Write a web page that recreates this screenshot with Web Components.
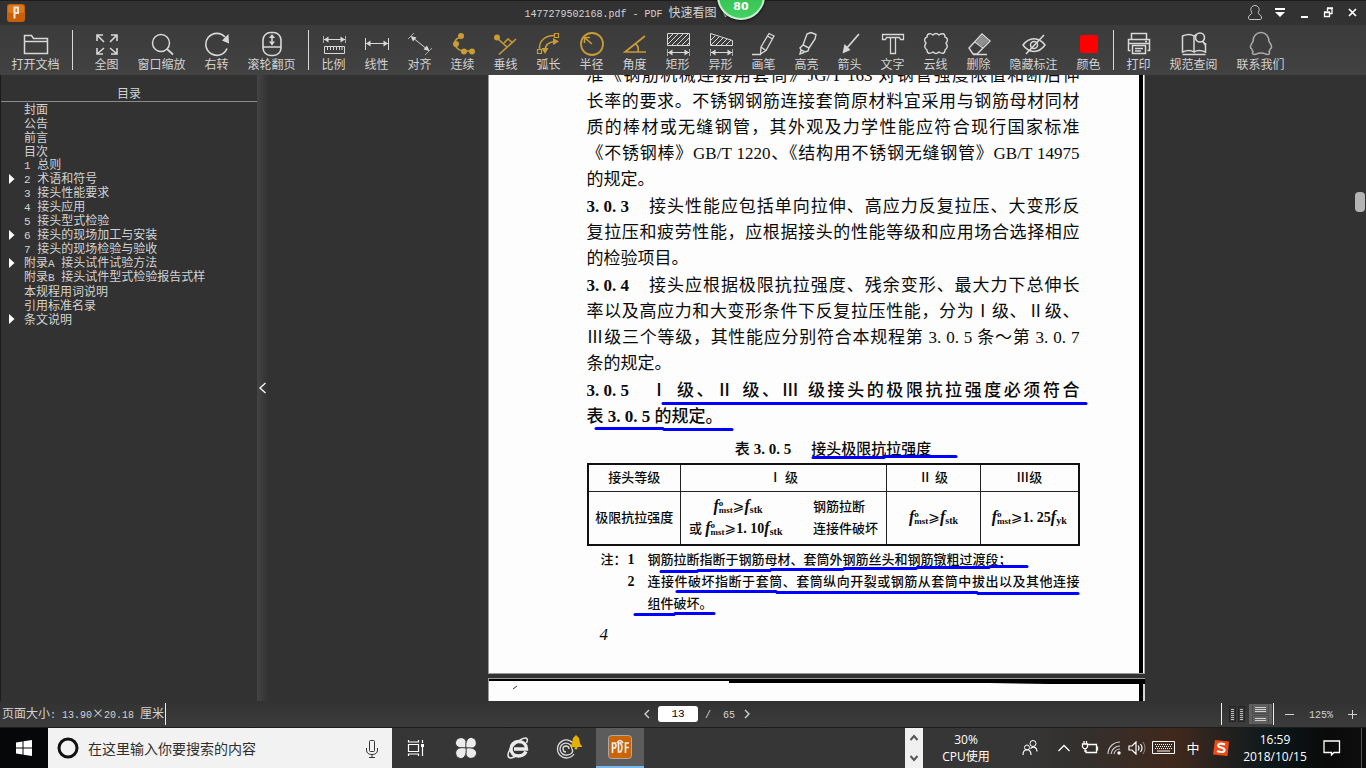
<!DOCTYPE html>
<html lang="zh-CN">
<head>
<meta charset="utf-8">
<title>1477279502168.pdf - PDF 快速看图</title>
<style>
html,body{margin:0;height:100%}
body{display:flex;flex-direction:column;overflow:hidden;background:#323232;color:#d2d2d2;font:12px/14px "Noto Sans CJK SC",sans-serif}
app-workspace{flex:1;min-height:0}
</style>
</head>
<body>
<app-titlebar></app-titlebar>
<app-toolbar></app-toolbar>
<app-workspace>
  <outline-panel slot="side"></outline-panel>
  <doc-viewer></doc-viewer>
</app-workspace>
<status-bar></status-bar>
<task-bar></task-bar>

<script>
const define = (name, html, setup) => customElements.define(name, class extends HTMLElement {
  constructor() {
    super();
    this.attachShadow({mode: 'open'}).innerHTML = html;
  }
  connectedCallback() { if (setup && !this.ready) { this.ready = true; setup(this.shadowRoot, this); } }
});

/* Half-width runs are set in a monospaced face. */
const half = text => text.replace(/[\x20-\x7e]+/g, run => `<span class="m">${run.replace(/ /g, '&nbsp;')}</span>`);
const halfStyle = '.m{font:10px/14px "Liberation Mono",monospace}';

const reset = `*,*::after,:host{box-sizing:border-box}
button{appearance:none;border:0;padding:0;margin:0;background:none;color:inherit;font:inherit;cursor:pointer}
a{color:inherit;text-decoration:none}
svg{display:block;fill:none}
svg:not([stroke]){stroke:currentColor}
.f{fill:currentColor;stroke:none}`;

/* ---------- title bar ---------- */
define('app-titlebar', `
<style>${reset}${halfStyle}
:host{display:grid;grid-template-columns:38.4% 1fr auto;align-items:center;height:25px;flex:none;background:#323232;border-top:1px solid #1c1c1c;position:relative}
.logo{margin-left:7px}
.title{white-space:nowrap}
.win{display:flex;align-items:center;gap:2px;padding-right:3px;color:#fff}
.badge{position:absolute;left:calc(50% + 34px);top:-29px;width:48px;height:48px;border-radius:50%;background:linear-gradient(#35c050 40%,#43d163);border:2px solid #c9efd0;display:flex;align-items:flex-end;justify-content:center;color:#fff;font:bold 11px/14px "DejaVu Sans",sans-serif;padding-bottom:4px;box-shadow:0 1px 3px #000a}
</style>
<svg class="logo" width="18" height="18" viewBox="0 0 18 18" stroke="none"><rect width="18" height="18" rx="3" fill="#c96006"/><rect x="1" y="1" width="16" height="8" rx="2" fill="#d87a1c"/><path d="M7.5 14.500V3.500h3.500v5.500H7.500" stroke="#f4e3d2" stroke-width="2"/></svg>
<div class="title">${half('1477279502168.pdf - PDF ')}快速看图${half(' V')}</div>
<div class="win">
<button aria-label="账户"><svg width="24" height="20" stroke="#c8c8c8"><path d="M8.500 9c-2-4 1-6.500 3.500-6.500s5.500 2.500 3.500 6.500c-.5 1-.5 1.500.500 2 2 1.500 2.500 2.500 2.500 4 0 1-.5 1.500-1.500 1.500H7c-1 0-1.500-.5-1.500-1.500 0-1.500.5-2.500 2.500-4 1-.5 1-1 .5-2z"/></svg></button>
<button aria-label="菜单"><svg width="22" height="20"><path class="f" d="M6 5h10v2H6zM6 9h10l-5 5z"/></svg></button>
<button aria-label="最小化"><svg width="22" height="20"><path class="f" d="M8 13h7v2H8z"/></svg></button>
<button aria-label="还原"><svg width="22" height="20"><path d="M7.500 9.500h5v4h-5zM7 9h6M10.500 8V5.500h4.500v5h-2M10 5h6" stroke-width="1.300"/></svg></button>
<button aria-label="关闭"><svg width="22" height="20"><path d="M8 6l7 7M15 6l-7 7" stroke-width="1.700"/></svg></button>
</div>
<div class="badge">80</div>`);

/* ---------- toolbar ---------- */
const arrows = (y, a, b) => `<path d="M${a} ${y}H${b}"/><path class="f" d="M${a} ${y}l4.500-3v6zM${b} ${y}l-4.500-3v6z"/>`;
const icons = {
  open: '<path d="M2.500 22.500v-18h7l2 3h14v15zM2.500 10.500h23" stroke-width="1.500"/>',
  full: '<path d="M4 10V4h6M4 4l7 7M18 4h6v6M24 4l-7 7M4 17v6h6M4 23l7-6M24 17v6h-6M24 23l-7-6" stroke-width="1.600"/>',
  zoom: '<circle cx="13" cy="12" r="8.500" stroke-width="1.500"/><path d="M19 18l6 5.500" stroke-width="1.700"/>',
  turn: '<path d="M24 17.500A11 11 0 1 1 22 6" stroke-width="1.600"/><path class="f" d="M25.500 3l.5 9.500-7-3z"/>',
  wheel: '<rect x="5" y="1.500" width="18" height="23" rx="7.500" stroke-width="1.600"/><path d="M5 16h18M14 5v8" stroke-width="1.500"/><path class="f" d="M14 3l3 4h-6zM14 14.500l3-4h-6z"/>',
  scale: `<path d="M3.500 5v7M25.500 5v7" stroke="#aaa"/>${arrows(8.5, 4, 25)}<path d="M4.500 15.500h20v7h-20zM7.500 16v3M10.500 16v3M13.500 16v3M16.500 16v3M19.500 16v3M22 16v3"/>`,
  linear: `<path d="M2.500 7v12M25.500 7v12"/>${arrows(12.5, 3, 25)}`,
  align: '<path d="M2 8l6-6M19 24l7-7" stroke="#aaa"/><path d="M6 6l16 13"/><path class="f" d="M4.500 5l6 1.500-3.500 4zM23.500 20l-6-1.500 3.500-4z"/>',
  chain: '<path d="M12 6C5 8 4 13 8 17c3 3 5 3 9 3h6" stroke-width="1.500"/><g class="f"><circle cx="12" cy="5" r="3"/><circle cx="7" cy="13" r="3"/><circle cx="15" cy="20.500" r="3"/><circle cx="23" cy="20.500" r="3"/></g>',
  perp: '<path d="M7 23.500L24 8M5 7l10 9M12 12l4-4 5 4" stroke-width="1.600"/><circle class="f" cx="5" cy="6.500" r="3"/>',
  arc: '<path d="M4.500 18C4 10 10 4.500 19 4.500M10 20c0-5 3-9 10-9.500" stroke-width="1.500"/><path d="M2.500 18.500h4v4h-4zM19.500 2.500h4v4h-4z" stroke-width="1.200"/><path class="f" d="M18 7l6 3.500-6 3.500zM6.500 17h7L10 23z"/>',
  radius: '<circle cx="14" cy="13" r="11" stroke-width="1.800"/><path d="M14 13L7 7M6.500 12V6.500H12" stroke-width="1.600"/>',
  angle: '<path d="M24 5L4 21h21M14.500 13c3 2 3 4 2.500 8" stroke-width="1.700"/>',
  rect: `<path d="M3.500 2.500h22v12h-22zM4 8l5-5M4 13L14 3M8 14L19 3M13 14L24 3M18 14l7-7M23 14l2-2"/><path d="M3.500 18v7M25.500 18v7" stroke="#aaa"/>${arrows(21.5, 4, 25)}`,
  shape: `<path d="M3.500 2.500l22 7v5h-22zM4 9l4-4M4 14l8-8M9 14l7-7M14 14l6-6M19 14l5-5"/><path d="M3.500 18v7M25.500 18v7" stroke="#aaa"/>${arrows(21.5, 4, 25)}`,
  pen: '<path d="M19 2.500l5 2.500-8 14.500-5.500 3.500.5-7zM11 16l5 3.500M17.500 5l5 3M2 23.500h9" stroke-width="1.300"/>',
  mark: '<path d="M14 3l4-1.500 5 2-1 4.500-6 9-6-3zM10 14l-3 3 1 2 4 2 3-1 1-3M8 19l-1 4 4-1.500" stroke-width="1.400"/>',
  arrow: '<path d="M23 3L10 18" stroke-width="1.700"/><path class="f" d="M6.500 22.500l2-9.500 6 6z"/>',
  text: '<path d="M3.500 3.500h21v5h-3l-1-2h-4v16h-5v-16h-4l-1 2h-3zM11.500 6.500h5" stroke-width="1.300"/>',
  cloud: '<path d="M5 6c0-4 4-4 6-2 2-2 4-2 6 0 3-2 6-2 6 2 3 1 3 4 1 6 2 3 2 5-1 7 0 4-3 4-6 2-2 2-4 2-6 0-3 2-6 2-6-2-3-2-3-4-1-7-2-2-2-5 1-6z" stroke-width="1.400"/>',
  erase: '<path d="M4 17L17 3l8 7-13 13H8zM10 11l8 6M8 23.500h14" stroke-width="1.400"/><path d="M11 11l6 5 7-6-7-6z" fill="#8f8f8f" stroke="none"/>',
  hide: '<path d="M3 14c6-8.500 16-8.500 22 0-6 8.500-16 8.500-22 0z" stroke-width="1.500"/><circle cx="14" cy="14" r="3.500" stroke-width="1.500"/><path d="M24 4L6 23" stroke-width="1.600"/>',
  color: '<rect x="5" y="4" width="18" height="18" rx="2" fill="#f00" stroke="none"/>',
  print: '<path d="M6.500 8V2.500h15V8M5.500 19.500h-2v-11h21v11h-2M4 12.500h20M7.500 14.500h13v8h-13zM10 17.500h8M10 20h6M20 10.500h2" stroke-width="1.500"/>',
  book: '<path d="M14 21c-3-2-7-2-11.500 0V5C7 3 11 3 14 5zM14 21c3-2 7-2 11.500 0v-9M14 5l3-1.500M2.500 23.500h23" stroke-width="1.500"/><circle cx="20" cy="6.500" r="4.500" stroke-width="1.600"/><path d="M22.500 10l3 4" stroke-width="1.700"/>',
  qq: '<path d="M9.500 23c-3 1-5 0-3.500-2.500-1-1-1-2-1.500-3-2 0-1-4 1.500-7C6 5 9.500 1.500 14 1.500s8 3.500 8 9c2.500 3 3.500 7 1.500 7-.5 1-.5 2-1.500 3 1.500 2.500-.5 3.500-3.500 2.500-2-1.500-7-1.500-9 0z" stroke="#aaa" stroke-width="1.500"/>'
};

define('tool-button', `
<style>${reset}
:host{display:block;width:43px;flex:none}
:host([wide]){width:67px}
:host([gold]) svg{color:#c99c36}
button{display:flex;flex-direction:column;align-items:center;width:100%;white-space:nowrap}
svg{color:#d8d8d8}
</style>
<button><svg width="28" height="26" viewBox="0 0 28 26"></svg><span><slot></slot></span></button>`,
(root, host) => { root.querySelector('svg').innerHTML = icons[host.getAttribute('icon')]; });

define('app-toolbar', `
<style>
:host{display:flex;align-items:flex-start;height:50px;flex:none;padding:6px 2px 0;box-sizing:border-box;background:linear-gradient(#3b3b3b,#424242)}
i{width:1px;height:40px;margin:-1px 3px 0;background:#d8d8d8;flex:none}
i.far{margin-right:12px}
</style>
<tool-button wide icon="open">打开文档</tool-button><i class="far"></i>
<tool-button icon="full">全图</tool-button><tool-button wide icon="zoom">窗口缩放</tool-button><tool-button icon="turn">右转</tool-button><tool-button wide icon="wheel">滚轮翻页</tool-button><i></i>
<tool-button icon="scale">比例</tool-button><tool-button icon="linear">线性</tool-button><tool-button icon="align">对齐</tool-button>
<tool-button gold icon="chain">连续</tool-button><tool-button gold icon="perp">垂线</tool-button><tool-button gold icon="arc">弧长</tool-button><tool-button gold icon="radius">半径</tool-button><tool-button gold icon="angle">角度</tool-button>
<tool-button icon="rect">矩形</tool-button><tool-button icon="shape">异形</tool-button><tool-button icon="pen">画笔</tool-button><tool-button icon="mark">高亮</tool-button><tool-button icon="arrow">箭头</tool-button><tool-button icon="text">文字</tool-button><tool-button icon="cloud">云线</tool-button><tool-button icon="erase">删除</tool-button><tool-button wide icon="hide">隐藏标注</tool-button><tool-button icon="color">颜色</tool-button><i></i>
<tool-button icon="print">打印</tool-button><tool-button wide icon="book">规范查阅</tool-button><tool-button wide icon="qq">联系我们</tool-button>`);

/* ---------- workspace ---------- */
define('app-workspace', `
<style>${reset}
:host{display:flex}
slot[name=side]::slotted(*){width:257px;flex:none}
.split{width:11px;flex:none;display:flex;align-items:center;background:linear-gradient(90deg,#444,#323232)}
slot:not([name])::slotted(*){flex:1;min-width:0}
</style>
<slot name="side"></slot>
<button class="split" aria-label="收起目录"><svg width="11" height="14"><path d="M8.500 2L3 7l5.500 5" stroke="#eee" stroke-width="1.500"/></svg></button>
<slot></slot>`);

const outline = [['封面'], ['公告'], ['前言'], ['目次'], ['1 总则'], ['2 术语和符号', 1], ['3 接头性能要求'], ['4 接头应用'], ['5 接头型式检验'], ['6 接头的现场加工与安装', 1], ['7 接头的现场检验与验收'], ['附录A 接头试件试验方法', 1], ['附录B 接头试件型式检验报告式样'], ['本规程用词说明'], ['引用标准名录'], ['条文说明', 1]];
define('outline-panel', `
<style>${reset}${halfStyle}
:host{display:block;border-left:1px solid #1c1c1c;background:#323232}
.m{font-size:11px}
h2{margin:0;padding:11px 0 1px;border-bottom:1px solid #8c8c8c;text-align:center;font:inherit}
ul{list-style:none;margin:0;padding:0}
li{display:flex;align-items:center;height:14px;padding-left:8px;white-space:nowrap}
.tw{width:15px;height:14px;flex:none}
.tw svg{color:#fff}
</style>
<h2>目录</h2>
<ul>${outline.map(([t, kids]) => `<li>${kids ? '<button class="tw" aria-label="展开"><svg width="6" height="14"><path class="f" d="M0 2l5.500 5L0 12z"/></svg></button>' : '<span class="tw"></span>'}<a href="#">${half(t)}</a></li>`).join('')}</ul>`);

/* ---------- document ---------- */
const num = t => `<b class="no">${t}</b>`;
const f = sub => `<i>f</i><sub>${sub}</sub>`;
const fm = '<i>f</i><span class="ss"><span>o</span><span>mst</span></span>';
const ge = '<span class="ge">⩾</span>';
const strokes = [
  [662,403,1087,403],[595,428,664,428],[663,429,733,429],[812,457,885,457],[883,456,957,456],
  [660,571,698,571],[697,570,771,570],[770,569,844,569],[843,568,917,568],[916,567,990,567],[989,566,1028,566],
  [676,591,777,591],[776,592,978,592],[977,593,1079,593],[634,614,675,614],[674,613,715,613]];

define('doc-page', `
<style>${reset}
:host{display:block;position:relative;width:657px;height:612px;flex:none;padding:1px 65px 0 98px;border-left:1px solid #999;border-bottom:1px solid #999;background:#fdfdfd;color:#0b0b0b;font:17px/26px "Liberation Serif","Noto Sans CJK SC",serif}
:host::after{content:"";box-sizing:border-box;position:absolute;top:0;bottom:0;right:0;width:6px;border-left:4px solid #000;border-right:1px solid #aaa;background:#fff}
p{margin:0}
p+p{margin-top:1px}
p span.l{display:block;white-space:nowrap}
.j{text-align:justify;text-align-last:justify}
.no{display:inline-block;text-align-last:start;margin-right:19px;white-space:pre}
.strong{font-weight:500}
.cap{display:flex;justify-content:center;gap:20px;margin-top:6px;font-size:15px;font-weight:500}
table{width:100%;margin-top:1px;border-collapse:collapse;border:2px solid #111;table-layout:fixed;font-size:13px;font-weight:500;line-height:22px}
th,td{border:1px solid #222;padding:0;text-align:center;font-weight:500;white-space:nowrap}
th{height:27px}td{height:54px}
.pair{display:grid;grid-template-columns:98px 1fr;grid-auto-rows:22px;column-gap:26px;padding-left:8px;text-align:left}
.pair .c{text-align:center}
td b{font-size:14px}
i{font-size:16px;line-height:16px}
sub{font-size:10px;line-height:0;vertical-align:-2px}
.ss{display:inline-flex;flex-direction:column;height:12px;text-align:left;vertical-align:5px;font-size:9px;line-height:7px}
.ge{font:14px/14px "DejaVu Sans",sans-serif}
dl{display:grid;grid-template-columns:27px 20px 1fr;margin:3px 0 0;padding-left:14px;font-size:13px;font-weight:500;line-height:22px;white-space:nowrap}
dl>*{margin:0}
dl b{font-size:14px}
dd{grid-column:3}
footer{margin-top:7px;padding-left:13px;font-style:italic;line-height:26px}
.ink{position:absolute;left:-1px;top:0}
</style>
<p><span class="l j">准《钢筋机械连接用套筒》JG/T 163 对钢管强度限值和断后伸</span><span class="l j">长率的要求。不锈钢钢筋连接套筒原材料宜采用与钢筋母材同材</span><span class="l j">质的棒材或无缝钢管，其外观及力学性能应符合现行国家标准</span><span class="l j">《不锈钢棒》GB/T 1220、《结构用不锈钢无缝钢管》GB/T 14975</span><span class="l">的规定。</span></p>
<p><span class="l j">${num('3. 0. 3')}接头性能应包括单向拉伸、高应力反复拉压、大变形反</span><span class="l j">复拉压和疲劳性能，应根据接头的性能等级和应用场合选择相应</span><span class="l">的检验项目。</span></p>
<p><span class="l j">${num('3. 0. 4')}接头应根据极限抗拉强度、残余变形、最大力下总伸长</span><span class="l j">率以及高应力和大变形条件下反复拉压性能，分为Ⅰ级、Ⅱ级、</span><span class="l j">Ⅲ级三个等级，其性能应分别符合本规程第 3. 0. 5 条～第 3. 0. 7</span><span class="l">条的规定。</span></p>
<p class="strong"><span class="l j">${num('3. 0. 5')}Ⅰ 级、Ⅱ 级、Ⅲ 级接头的极限抗拉强度必须符合</span><span class="l">表 <b>3. 0. 5</b> 的规定。</span></p>
<div class="cap"><span>表 <b>3. 0. 5</b></span><span>接头极限抗拉强度</span></div>
<table>
<colgroup><col style="width:93px"><col style="width:206px"><col style="width:94px"><col></colgroup>
<tr><th>接头等级</th><th>Ⅰ 级</th><th>Ⅱ 级</th><th>Ⅲ级</th></tr>
<tr><td>极限抗拉强度</td><td><div class="pair"><b class="c">${fm}${ge}${f('stk')}</b><span>钢筋拉断</span><span>或 <b>${fm}${ge}1. 10${f('stk')}</b></span><span>连接件破坏</span></div></td><td><b>${fm}${ge}${f('stk')}</b></td><td><b>${fm}${ge}1. 25${f('yk')}</b></td></tr>
</table>
<dl><dt>注：</dt><b>1</b><dd>钢筋拉断指断于钢筋母材、套筒外钢筋丝头和钢筋镦粗过渡段；</dd><dt></dt><b>2</b><dd class="j">连接件破坏指断于套筒、套筒纵向开裂或钢筋从套筒中拔出以及其他连接</dd><dd>组件破坏。</dd></dl>
<footer>4</footer>
<svg class="ink" width="657" height="611" viewBox="488 62 657 611" stroke="#00f" stroke-width="3" stroke-linecap="round">${strokes.map(([a, b, c, d]) => `<path d="M${a + 1} ${b}.500L${c - 1} ${d}.500"/>`).join('')}</svg>`);

define('doc-viewer', `
<style>
:host{display:flex;flex-direction:column;align-items:center;gap:4px;overflow:hidden;position:relative;box-sizing:border-box;padding-right:2px;background:#323232}
doc-page{margin-top:-13px}
.next{position:relative;box-sizing:border-box;width:657px;flex:1 0 23px;border-top:1px solid #999;border-left:1px solid #999;background:#fdfdfd}
.next svg{display:block;width:100%;height:22px}
.thumb{position:absolute;right:1px;top:117px;width:10px;height:20px;border-radius:4px;background:#b4b4b4}
</style>
<doc-page></doc-page>
<div class="next"><svg viewBox="0 0 656 22" preserveAspectRatio="none"><path d="M0 0h656v5H560l-60-1H240V2H0z"/><path d="M650 3h4v19h-4z"/><path d="M655 5v17" stroke="#aaa"/><path d="M24 10l4-3" stroke="#333"/></svg></div>
<div class="thumb"></div>`);

/* ---------- status bar ---------- */
define('status-bar', `
<style>${reset}${halfStyle}
:host{display:grid;grid-template-columns:47% auto 1fr;align-items:center;height:27px;flex:none;background:linear-gradient(#323232,#3c3c3c);border-bottom:1px solid #1c1c1c}
.size{display:flex;align-items:center;gap:1px;padding-left:2px;white-space:nowrap}
.sep{width:1px;height:22px;background:#eee}
.pager,.view{display:flex;align-items:center}
input{width:40px;height:16px;margin:0 7px 0 5px;border:0;border-radius:3px;padding:0;background:#fff;color:#000;text-align:center;font:11px/14px "Liberation Mono",monospace}
.view{justify-content:flex-end;padding-right:7px}
.two{width:27px;padding-left:6px}
.one{width:23px;height:20px;background:#606060;margin-right:1px}
.minus{margin-left:9px}
.pct{width:50px;text-align:center}
</style>
<div class="size"><span>页面大小${half(': 13.90')}×${half('20.18 ')}厘米</span><span class="sep"></span></div>
<div class="pager"><button aria-label="上一页"><svg width="11" height="14"><path d="M7 3L3 7l4 4" stroke-width="1.400"/></svg></button><input value="13" aria-label="页码"><span>${half('/  65')}</span><button aria-label="下一页"><svg width="20" height="14"><path d="M10 3l4 4-4 4" stroke-width="1.400"/></svg></button></div>
<div class="view"><span class="sep"></span>
<button class="two" aria-label="双页"><svg width="20" height="18"><path d="M1.500 1.500h6v15h-6zM10.500 1.500h6v15h-6z" stroke="#222"/><path d="M3 4.500h3M3 6.500h3M3 8.500h3M3 10.500h3M3 12.500h3M3 14.500h3M12 4.500h3M12 6.500h3M12 8.500h3M12 10.500h3M12 12.500h3M12 14.500h3" stroke="#bbb"/></svg></button>
<button class="one" aria-label="单页连续"><svg width="23" height="20"><path d="M3.500 1v8.500h16V1M3.500 19v-7.500h16V19" stroke="#4a4a4a"/><path d="M6 3.500h11M6 5.500h11M6 7.500h11M6 14.500h11M6 16.500h11" stroke="#d0d0d0"/></svg></button>
<span class="sep"></span>
<button class="minus" aria-label="缩小"><svg width="13" height="14"><path d="M2 7.500h9"/></svg></button><span class="pct">${half('125%')}</span><button aria-label="放大"><svg width="13" height="14"><path d="M2 7.500h9M6.500 3v9"/></svg></button></div>`);

/* ---------- taskbar ---------- */
define('task-bar', `
<style>${reset}
:host{display:flex;align-items:stretch;height:40px;flex:none;color:#fff;background:linear-gradient(90deg,#363636 75%,#33302e 79%,#41281c 86%,#2a2320 89%,#0c181b 93%,#0a0a0a 97%,#0d0d0d);font:12px/17px "Open Sans","Noto Sans CJK SC",sans-serif}
button{display:flex;align-items:center;justify-content:center;flex:none}
.start{width:48px;background:#050708}
.search{display:flex;align-items:center;width:344px;background:#f2f2f2;color:#111;flex:none}
.search svg{flex:none}
input{flex:1;min-width:0;border:0;padding:0;background:none;outline:0;color:#222;font:14px/20px "Noto Sans CJK SC",sans-serif}
input::placeholder{color:#2e2e2e;opacity:1}
.app{width:52px}
.app.first{width:48px}
.app.on{width:48px;background:#5c5c5c;border-bottom:2px solid #76b9ed}
.tray{display:flex;margin-left:auto}
.spin{width:18px;background:#f0f0f0;color:#555}
.cpu,.clock{display:flex;flex-direction:column;justify-content:center;text-align:center;white-space:nowrap}
.cpu{width:86px}.clock{width:78px}
.t{width:26px}
.people{width:42px}.wifi{width:22px}.vol{width:23px}.kbd{width:32px}.sogou{width:30px}.note{width:36px}
.ime{font-size:13px}
.edge{width:5px;border-left:1px solid #555;margin-left:11px}
</style>
<button class="start" aria-label="开始"><svg width="16" height="16"><path class="f" d="M0 2.500l6.500-1v6H0zM7.500 1.300L16 0v7.500H7.500zM0 8.500h6.500v6l-6.500-1zM7.500 8.500H16V16l-8.500-1.300z"/></svg></button>
<label class="search"><svg width="40" height="40"><circle cx="20" cy="20" r="9" stroke-width="3"/></svg><input placeholder="在这里输入你要搜索的内容" aria-label="搜索"><svg width="40" height="40" stroke="#333"><rect x="17.500" y="12.500" width="5" height="11" rx="1"/><path d="M14.500 20v2c0 3 2 4.500 5.500 4.500s5.500-1.500 5.500-4.500v-2M20 27v3M17 29.500h6"/></svg></label>
<button class="app first" aria-label="任务视图"><svg width="18" height="16" stroke="#fff" stroke-width="1.200"><path d="M1.500 4.500h10v7h-10zM1.500 0v2h10V0M1.500 16v-2h10v2M15.500 0v3M15.500 7v9"/><path class="f" d="M14 4h3v3h-3z"/></svg></button>
<button class="app" aria-label="搜狗"><svg width="22" height="22" viewBox="0 0 22 22"><g fill="#ececec" stroke="#363636"><path d="M11 11C4 12 0 9 .5 5.500 1 1 6 0 8 1c3 1 4 5 3 10z"/><path d="M11 11c-1-7 2-11 5.500-10.500C21 1 22 6 21 8c-1 3-5 4-10 3z"/><path d="M11 11c7-1 11 2 10.500 5.500C21 21 16 22 14 21c-3-1-4-5-3-10z"/><path d="M11 11c1 7-2 11-5.500 10.500C1 21 0 16 1 14c1-3 5-4 10-3z"/></g></svg></button>
<button class="app" aria-label="Internet Explorer"><svg width="24" height="24" viewBox="0 0 24 24" stroke="#ececec"><path d="M20 15.500c-1.500 3-4 4.500-7.500 4.500-4.500 0-7.500-3-7.500-7s3-7.500 7.500-7.500 8 3 8 7.500H8" stroke-width="3.400"/><path d="M20.500 7c1.500-3 1-5-1-5C15 2 2 12 2 19c0 4 4 3.500 8 1" stroke-width="1.500"/></svg></button>
<button class="app" aria-label="通知"><svg width="30" height="28" viewBox="0 0 30 28"><path d="M20 12a9 9 0 1 0-1 8M17 15a6 6 0 1 0-5 6c4 0 7-3 5-6M14 15a3 3 0 1 0-3 3" stroke="#ddd" stroke-width="1.300"/><path d="M16 11c2-1 1-7 3-8 1-1 1-1 2-2 1 1 1 1 2 2 2 1 1 7 4 9v1H15v-1z" fill="#e5b100" stroke="none"/><circle cx="21" cy="14" r="1.500" fill="#e5b100" stroke="none"/></svg></button>
<button class="app on" aria-label="PDF 快速看图"><svg width="24" height="24" viewBox="0 0 24 24"><rect x=".5" y=".5" width="23" height="23" rx="3" fill="#cb6405" stroke="#aaa"/><path d="M4.500 18V8h2.500q2 2.500 0 5H5M10.500 8v9h2q3-4.500 0-9zM17.500 18V8H21M18 12.500h3M9 8q3-5 6 0" stroke="#eee" stroke-width="1.700"/></svg></button>
<div class="tray">
<button class="spin" aria-label="滚动"><svg width="10" height="32"><path d="M1.500 8L5 4l3.500 4M1.500 24L5 28l3.500-4" stroke-width="2"/></svg></button>
<div class="cpu"><span>30%</span><span>CPU使用</span></div>
<button class="people" aria-label="人脉"><svg width="16" height="18"><circle cx="11" cy="4.500" r="3"/><circle cx="5" cy="8.500" r="2.500"/><path d="M1 16c0-7 8-7 8 0M8.500 9.500c3-3 6.500-1 6.500 3" stroke-width="1.200"/></svg></button>
<button class="t" aria-label="显示隐藏的图标"><svg width="14" height="10"><path d="M1.500 8L7 2.500 12.500 8" stroke-width="1.300"/></svg></button>
<button class="t" aria-label="电池"><svg width="18" height="16"><path d="M7 4.500h8.500v8H5V10M16.500 6.500v4M1.500 4h5v3q-2.500 4-5 0zM3 1v3M5.500 1v3M4 8v4" stroke-width="1.300"/></svg></button>
<button class="wifi" aria-label="无线网络"><svg width="14" height="14"><path d="M1 13A12 12 0 0 1 13 1M4 13a9 9 0 0 1 9-8M7 13a6 6 0 0 1 6-5" stroke="#ccc" stroke-width="1.200"/><circle class="f" cx="12" cy="12" r="1.700"/></svg></button>
<button class="vol" aria-label="音量"><svg width="18" height="14"><path d="M1 5h3l4-4v12L4 9H1zM10 4.500q2 2.500 0 5M12.500 3q3 4 0 8" stroke-width="1.200"/><path d="M15 1q4 6 0 12" stroke="#888"/></svg></button>
<button class="kbd" aria-label="触摸键盘"><svg width="24" height="14"><path d="M.5.500h22v12H.500z"/><path d="M3 3.500h17M4 5.500h16M3 7.500h17" stroke-dasharray="1 1"/><path d="M5 10h13"/></svg></button>
<button class="t ime">中</button>
<button class="sogou" aria-label="搜狗输入法"><svg width="16" height="16"><path d="M2 0l14 1.500L14.500 16 0 14.500z" fill="#f24a15" stroke="none"/><path d="M12 4.500Q5 2.500 5 5.500c0 2.500 6.500 1.500 6.500 4.500 0 3-5 2-7.500 1" stroke="#fff" stroke-width="2.200"/></svg></button>
<div class="clock"><span>16:59</span><span>2018/10/15</span></div>
<button class="note" aria-label="操作中心"><svg width="18" height="18"><path d="M1 2h15.500v11.500H11L8.500 16V13.500H1z" stroke-width="1.300"/></svg></button>
<span class="edge"></span>
</div>`);
</script>
</body>
</html>
